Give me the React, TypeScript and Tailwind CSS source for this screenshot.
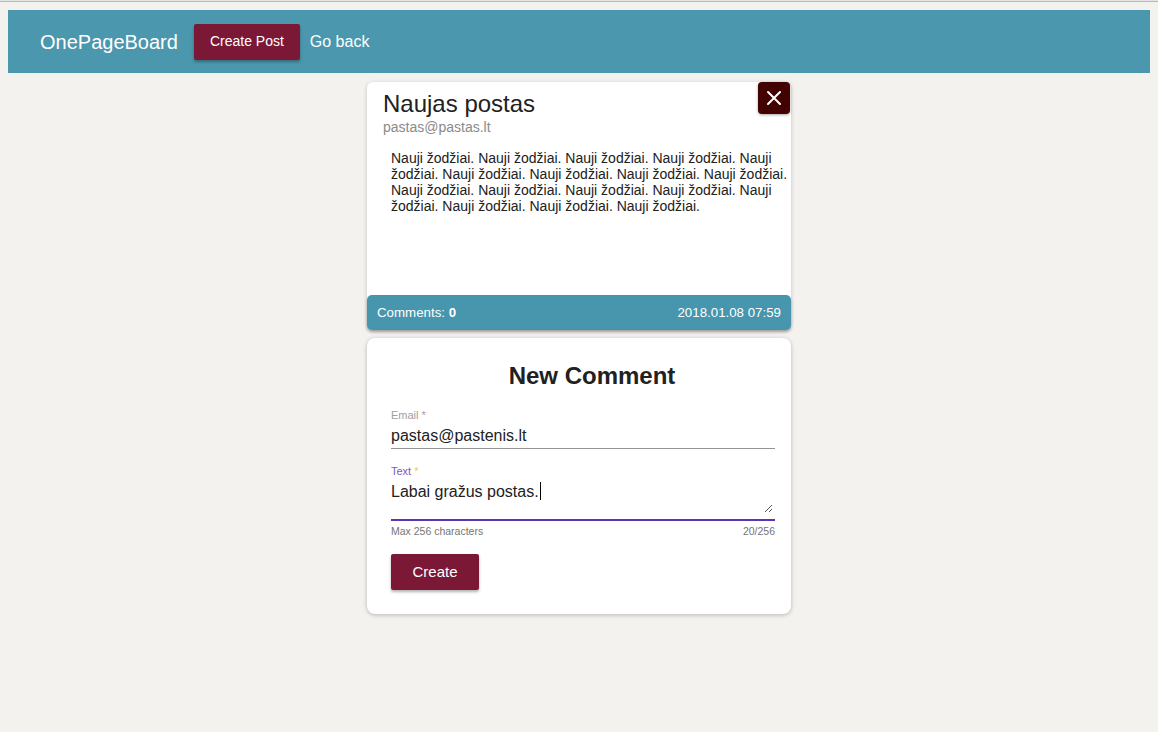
import React from "react";

const body =
  "Nauji žodžiai. Nauji žodžiai. Nauji žodžiai. Nauji žodžiai. Nauji žodžiai. Nauji žodžiai. Nauji žodžiai. Nauji žodžiai. Nauji žodžiai. Nauji žodžiai. Nauji žodžiai. Nauji žodžiai. Nauji žodžiai. Nauji žodžiai. Nauji žodžiai. Nauji žodžiai. Nauji žodžiai.";

export default function App() {
  return (
    <div
      className="min-h-[732px] bg-[#f3f2ee] text-[#212121]"
      style={{ fontFamily: '"Liberation Sans", Arial, sans-serif' }}
    >
      <div className="h-[1px] bg-[#e4e4e2]" />
      <div className="h-[1px] bg-[#b9b9b9]" />
      <header className="mx-[8px] mt-[8px] flex h-[63px] items-center bg-[#4a97ae] pl-[32px]">
        <div className="text-[20px] leading-[24px] text-white">OnePageBoard</div>
        <button className="ml-[16px] h-[36px] rounded-[2px] bg-[#7b1836] px-[16px] text-[14px] text-white shadow-[0_2px_3px_rgba(0,0,0,0.3)]">
          Create Post
        </button>
        <div className="ml-[10px] text-[16px] text-white">Go back</div>
      </header>

      <div className="mx-auto mt-[9px] w-[424px]">
        <div className="relative flex h-[248px] flex-col rounded-[6px] bg-white shadow-[0_1px_4px_rgba(0,0,0,0.2)]">
          <div className="pl-[16px] pt-[8px]">
            <div className="text-[24px] leading-[28px] text-[#212121]">Naujas postas</div>
            <div className="mt-[1px] text-[14px] leading-[16px] text-[#8a8a8a]">pastas@pastas.lt</div>
          </div>
          <div className="mt-[15px] pl-[24px] pr-[2px] text-[14px] leading-[16px] text-[#212121]">
            {body}
          </div>
          <div className="mt-auto flex h-[35px] items-center justify-between rounded-[5px] bg-[#4796ad] px-[10px] text-[13.3px] text-white shadow-[0_2px_3px_rgba(0,0,0,0.25)]">
            <span>
              Comments: <span className="font-bold">0</span>
            </span>
            <span>2018.01.08 07:59</span>
          </div>
          <button className="absolute right-[1px] top-0 flex h-[32px] w-[32px] items-center justify-center rounded-[4px] bg-[#420202] shadow-[0_1px_3px_rgba(0,0,0,0.35)]">
            <svg width="16" height="16" viewBox="0 0 16 16" fill="none">
              <path d="M2 2L14 14M14 2L2 14" stroke="white" strokeWidth="2" strokeLinecap="round" />
            </svg>
          </button>
        </div>

        <div className="mt-[8px] rounded-[8px] bg-white pb-[24px] pl-[24px] pr-[16px] pt-[24px] shadow-[0_1px_4px_rgba(0,0,0,0.25)]">
          <div className="pl-[18px] text-center text-[24px] font-bold leading-[28px] text-[#212121]">
            New Comment
          </div>
          <div className="mt-[18px]">
            <div className="text-[11px] leading-[14px] text-[#9e9e9e]">Email *</div>
            <div className="border-b border-[#949494] pb-[3px] pt-[4px] text-[16px] leading-[19px] text-[#212121]">
              pastas@pastenis.lt
            </div>
          </div>
          <div className="mt-[15px]">
            <div className="text-[11px] leading-[14px] text-[#7e57c2]">
              Text <span className="text-[#f5c26b]">*</span>
            </div>
            <div className="relative h-[43px] border-b-2 border-[#5e35b1] pt-[1px] text-[16px] leading-[19px] text-[#212121]">
              <span>Labai gražus postas.</span>
              <span className="ml-[1px] inline-block h-[18px] w-[1px] translate-y-[3px] bg-black align-baseline" />
              <svg className="absolute bottom-[6px] right-[2px]" width="9" height="9" viewBox="0 0 9 9">
                <path d="M8 1L1 8M8 5L5 8" stroke="#555" strokeWidth="1" />
              </svg>
            </div>
            <div className="mt-[4px] flex justify-between text-[10.5px] leading-[13px] text-[#757575]">
              <span>Max 256 characters</span>
              <span>20/256</span>
            </div>
          </div>
          <button className="mt-[16px] h-[36px] w-[88px] rounded-[2px] bg-[#7b1836] text-[15px] text-white shadow-[0_2px_3px_rgba(0,0,0,0.3)]">
            Create
          </button>
        </div>
      </div>
    </div>
  );
}
